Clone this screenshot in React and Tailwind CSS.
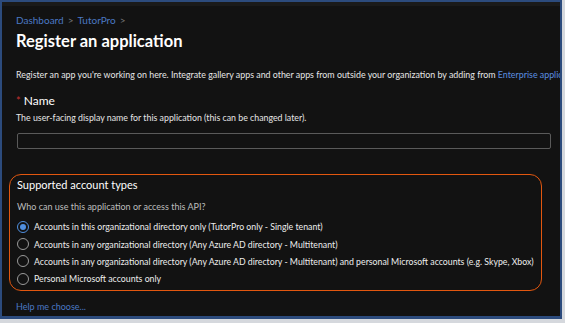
import React from 'react';

const options = [
  { label: 'Accounts in this organizational directory only (TutorPro only - Single tenant)', checked: true },
  { label: 'Accounts in any organizational directory (Any Azure AD directory - Multitenant)' },
  { label: 'Accounts in any organizational directory (Any Azure AD directory - Multitenant) and personal Microsoft accounts (e.g. Skype, Xbox)' },
  { label: 'Personal Microsoft accounts only' },
];

const Radio = ({ checked }) => (
  <span className={`w-[12px] h-[12px] rounded-full border flex items-center justify-center shrink-0 ${checked ? 'border-[#4f8fe0]' : 'border-[#9a9a9a]'}`}>
    {checked && <span className="w-[6px] h-[6px] rounded-full bg-[#4f8fe0]"></span>}
  </span>
);

export default function App() {
  return (
    <div className="w-[565px] h-[323px] bg-[#d5d8dd] overflow-hidden" style={{ fontFamily: 'Lato, "Open Sans", sans-serif' }}>
      <div className="w-[562px] h-[319px] bg-[#2c4b7d] pl-[2px] pt-[2px] pr-[2px] pb-[3px]">
        <div className="w-full h-full bg-[#121212] border-t-[4px] border-[#1a1a1a] overflow-hidden whitespace-nowrap">
          <div className="pl-[14px] pt-[7px]">
            <div className="flex items-center gap-[4px] text-[10px] text-[#4a78c4] h-[14px]">
              <span>Dashboard</span>
              <span className="text-[#777]">&gt;</span>
              <span>TutorPro</span>
              <span className="text-[#777]">&gt;</span>
            </div>
            <h1 className="text-[16.5px] font-bold text-white mt-[3px] leading-[22px]">Register an application</h1>

            <p className="text-[8.85px] text-[#e6e6e6] mt-[17px] leading-[12px]">
              Register an app you're working on here. Integrate gallery apps and other apps from outside your organization by adding from{' '}
              <span className="text-[#5b8fe0]">Enterprise applications</span>
            </p>

            <div className="flex items-center gap-[3px] mt-[12px] h-[16px]">
              <span className="text-[#c03030] text-[11px]">*</span>
              <span className="text-[12px] text-white">Name</span>
            </div>
            <p className="text-[8.8px] text-[#e6e6e6] mt-[3px] leading-[12px]">The user-facing display name for this application (this can be changed later).</p>
            <div className="w-[534px] h-[16px] border border-[#5a5a5a] rounded-[2px] mt-[9px] ml-[1px]"></div>
          </div>

          <div className="ml-[7px] mt-[25px] w-[533px] h-[117px] border-[1.5px] border-[#e2570f] rounded-[12px] pl-[7px] pt-[1px]">
            <div className="text-[11px] text-white leading-[18px]">Supported account types</div>
            <div className="text-[9px] text-[#bdbdbd] mt-[7px] leading-[12px]">Who can use this application or access this API?</div>
            <div className="mt-[5px] flex flex-col">
              {options.map((o, i) => (
                <div key={i} className="flex items-center gap-[5px] h-[17.4px]">
                  <Radio checked={o.checked} />
                  <span className="text-[8.75px] text-[#ededed]">{o.label}</span>
                </div>
              ))}
            </div>
          </div>

          <div className="pl-[14px] mt-[10px] text-[9px] text-[#4a78c4] leading-[12px]">Help me choose...</div>
        </div>
      </div>
    </div>
  );
}
